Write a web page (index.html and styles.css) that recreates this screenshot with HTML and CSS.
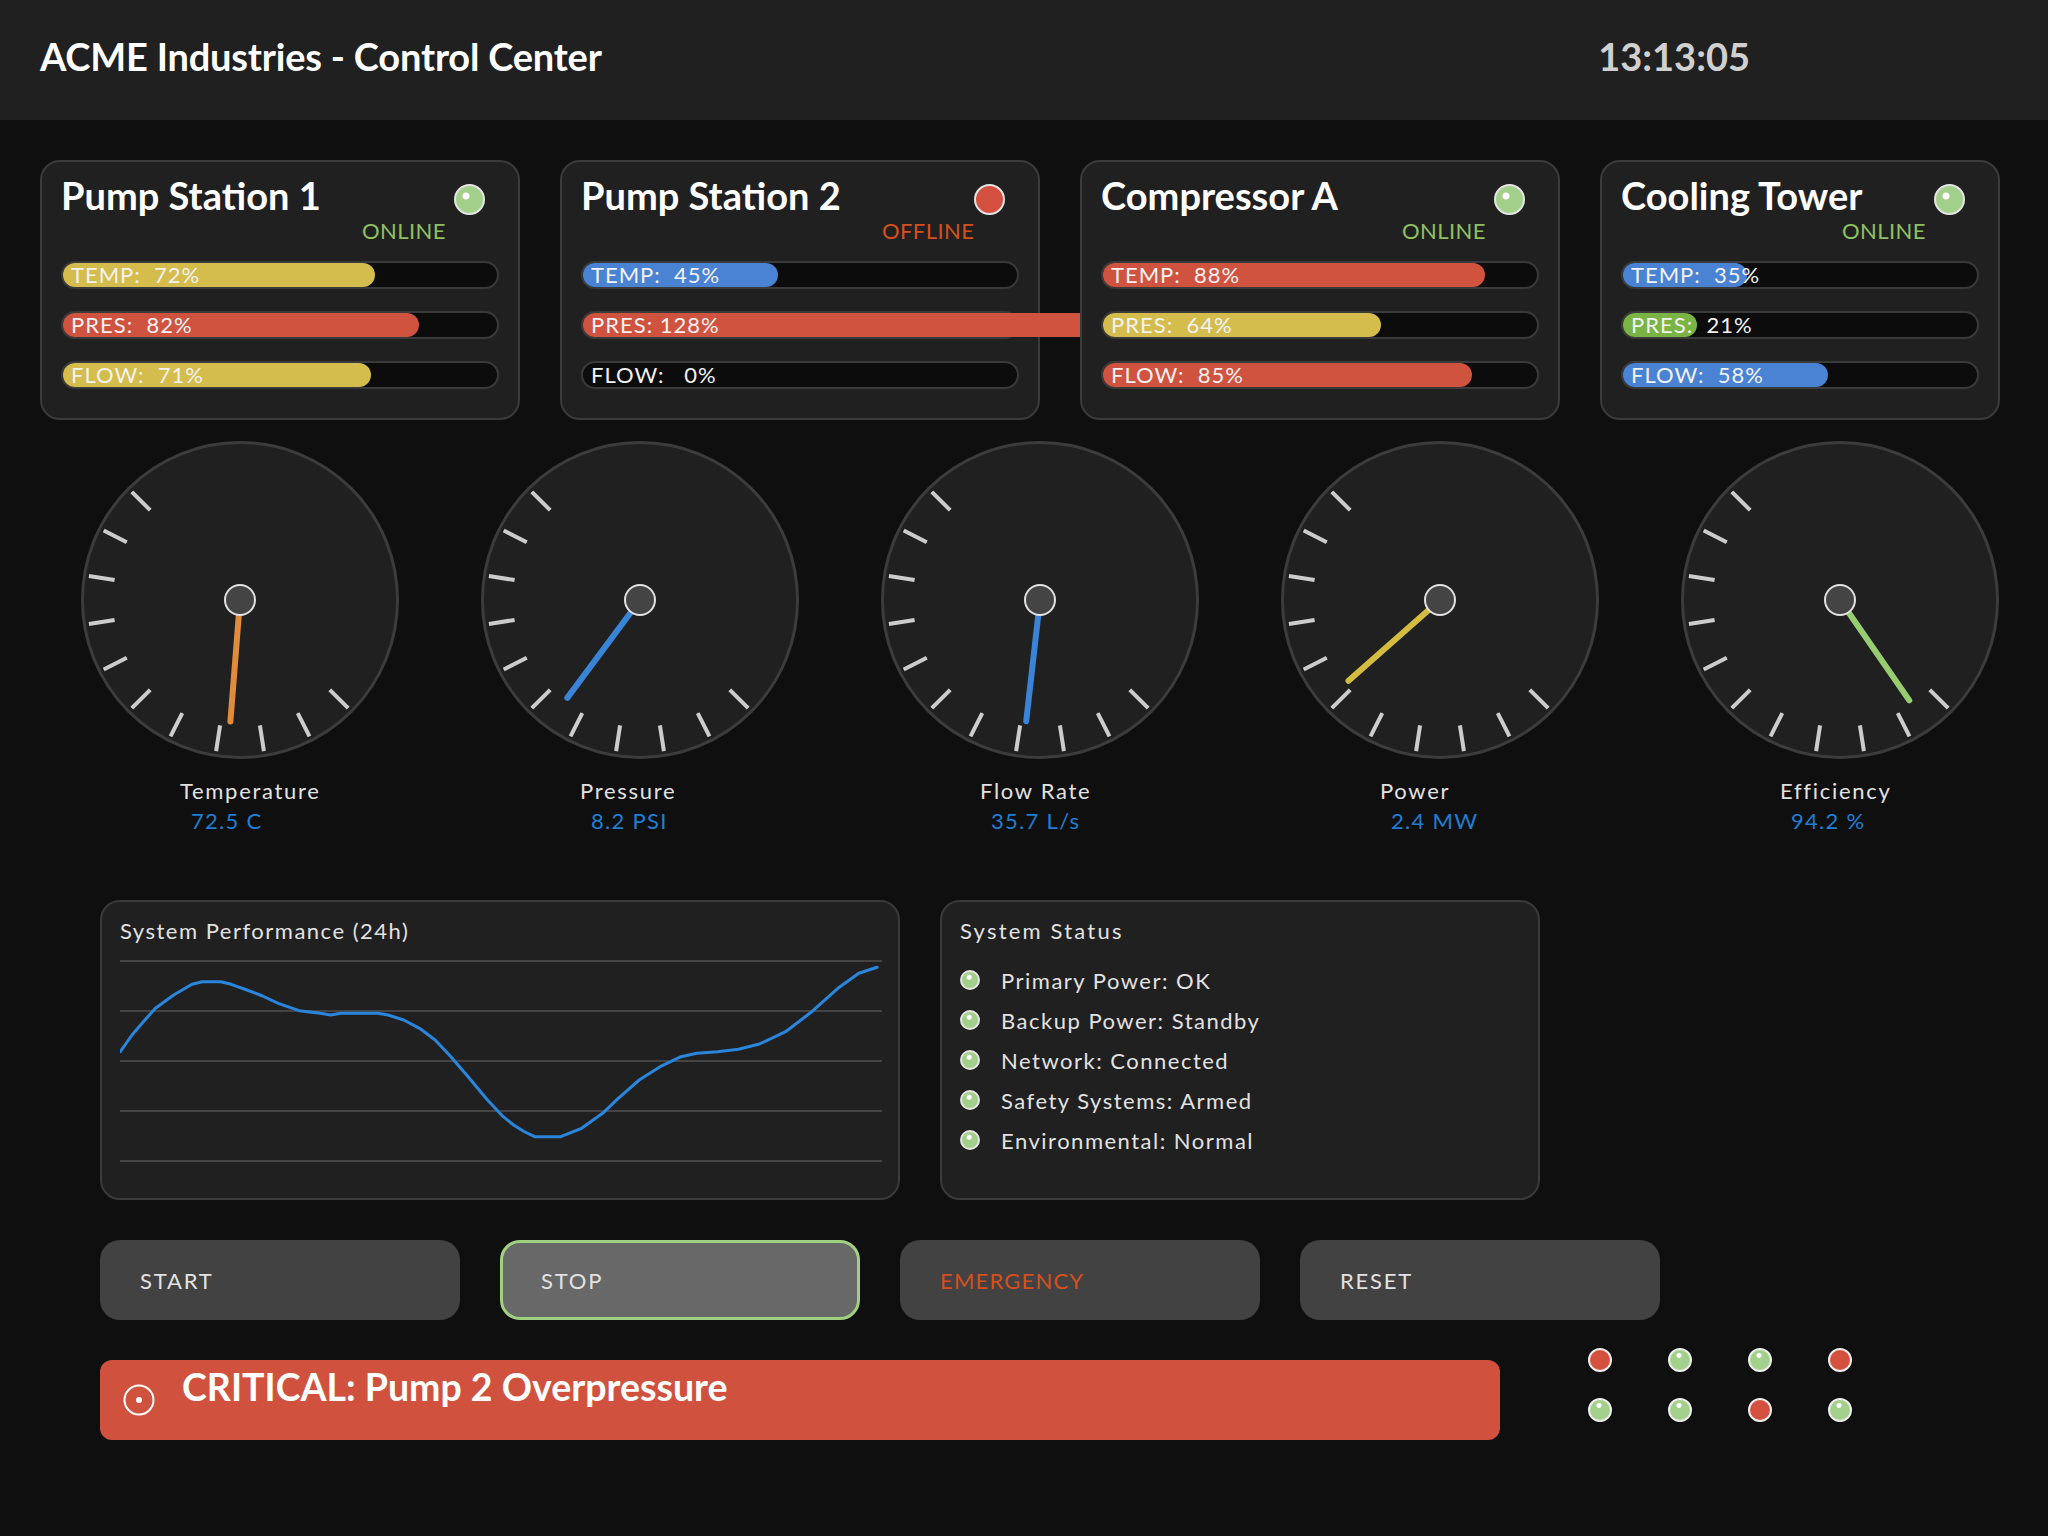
FILE: index.html
```html
<!DOCTYPE html>
<html lang="en">
<head>
<meta charset="utf-8">
<title>ACME Industries - Control Center</title>
<link rel="stylesheet" href="styles.css">
</head>
<body>
<header class="header">
  <div class="title">ACME Industries - Control Center</div>
  <div class="clock">13:13:05</div>
</header>
<main class="main">
  <section class="cards">
    <div class="card">
      <div class="card-head"><div class="card-title">Pump Station 1</div><div class="led led-green"></div></div>
      <div class="card-status"><span class="st st-online">ONLINE</span></div>
      <div class="bars">
        <div class="track"><div class="fill yellow" style="width:72%"></div><div class="bar-label">TEMP:  72%</div></div>
        <div class="track"><div class="fill red" style="width:82%"></div><div class="bar-label">PRES:  82%</div></div>
        <div class="track"><div class="fill yellow" style="width:71%"></div><div class="bar-label">FLOW:  71%</div></div>
      </div>
    </div>
    <div class="card">
      <div class="card-head"><div class="card-title">Pump Station 2</div><div class="led led-red"></div></div>
      <div class="card-status"><span class="st st-offline">OFFLINE</span></div>
      <div class="bars">
        <div class="track"><div class="fill blue" style="width:45%"></div><div class="bar-label">TEMP:  45%</div></div>
        <div class="track"><div class="fill red" style="width:128%"></div><div class="bar-label">PRES: 128%</div></div>
        <div class="track"><div class="fill" style="width:0%"></div><div class="bar-label">FLOW:   0%</div></div>
      </div>
    </div>
    <div class="card">
      <div class="card-head"><div class="card-title">Compressor A</div><div class="led led-green"></div></div>
      <div class="card-status"><span class="st st-online">ONLINE</span></div>
      <div class="bars">
        <div class="track"><div class="fill red" style="width:88%"></div><div class="bar-label">TEMP:  88%</div></div>
        <div class="track"><div class="fill yellow" style="width:64%"></div><div class="bar-label">PRES:  64%</div></div>
        <div class="track"><div class="fill red" style="width:85%"></div><div class="bar-label">FLOW:  85%</div></div>
      </div>
    </div>
    <div class="card">
      <div class="card-head"><div class="card-title">Cooling Tower</div><div class="led led-green"></div></div>
      <div class="card-status"><span class="st st-online">ONLINE</span></div>
      <div class="bars">
        <div class="track"><div class="fill blue" style="width:35%"></div><div class="bar-label">TEMP:  35%</div></div>
        <div class="track"><div class="fill green" style="width:21%"></div><div class="bar-label">PRES:  21%</div></div>
        <div class="track"><div class="fill blue" style="width:58%"></div><div class="bar-label">FLOW:  58%</div></div>
      </div>
    </div>
  </section>

  <section class="gauges">
    <div class="gauge">
      <svg viewBox="0 0 320 320" class="dial">
        <circle cx="160" cy="160" r="157.5" class="face"/>
        <g class="ticks">
          <line x1="70.2" y1="70.2" x2="51.8" y2="51.8"/><line x1="46.8" y1="102.3" x2="23.7" y2="90.5"/><line x1="34.6" y1="140.1" x2="8.9" y2="136.1"/><line x1="34.6" y1="179.9" x2="8.9" y2="183.9"/><line x1="46.8" y1="217.7" x2="23.7" y2="229.5"/><line x1="70.2" y1="249.8" x2="51.8" y2="268.2"/><line x1="102.3" y1="273.2" x2="90.5" y2="296.3"/><line x1="140.1" y1="285.4" x2="136.1" y2="311.1"/><line x1="179.9" y1="285.4" x2="183.9" y2="311.1"/><line x1="217.7" y1="273.2" x2="229.5" y2="296.3"/><line x1="249.8" y1="249.8" x2="268.2" y2="268.2"/>
        </g>
        <line x1="160" y1="160" x2="150.4" y2="281.6" class="needle" stroke="#e08c3c"/>
        <circle cx="160" cy="160" r="15" class="hub"/>
      </svg>
      <div class="gauge-label">Temperature</div>
      <div class="gauge-value">72.5 C</div>
    </div>
    <div class="gauge">
      <svg viewBox="0 0 320 320" class="dial">
        <circle cx="160" cy="160" r="157.5" class="face"/>
        <g class="ticks">
          <line x1="70.2" y1="70.2" x2="51.8" y2="51.8"/><line x1="46.8" y1="102.3" x2="23.7" y2="90.5"/><line x1="34.6" y1="140.1" x2="8.9" y2="136.1"/><line x1="34.6" y1="179.9" x2="8.9" y2="183.9"/><line x1="46.8" y1="217.7" x2="23.7" y2="229.5"/><line x1="70.2" y1="249.8" x2="51.8" y2="268.2"/><line x1="102.3" y1="273.2" x2="90.5" y2="296.3"/><line x1="140.1" y1="285.4" x2="136.1" y2="311.1"/><line x1="179.9" y1="285.4" x2="183.9" y2="311.1"/><line x1="217.7" y1="273.2" x2="229.5" y2="296.3"/><line x1="249.8" y1="249.8" x2="268.2" y2="268.2"/>
        </g>
        <line x1="160" y1="160" x2="87.3" y2="257.9" class="needle" stroke="#3a84d8"/>
        <circle cx="160" cy="160" r="15" class="hub"/>
      </svg>
      <div class="gauge-label">Pressure</div>
      <div class="gauge-value">8.2 PSI</div>
    </div>
    <div class="gauge">
      <svg viewBox="0 0 320 320" class="dial">
        <circle cx="160" cy="160" r="157.5" class="face"/>
        <g class="ticks">
          <line x1="70.2" y1="70.2" x2="51.8" y2="51.8"/><line x1="46.8" y1="102.3" x2="23.7" y2="90.5"/><line x1="34.6" y1="140.1" x2="8.9" y2="136.1"/><line x1="34.6" y1="179.9" x2="8.9" y2="183.9"/><line x1="46.8" y1="217.7" x2="23.7" y2="229.5"/><line x1="70.2" y1="249.8" x2="51.8" y2="268.2"/><line x1="102.3" y1="273.2" x2="90.5" y2="296.3"/><line x1="140.1" y1="285.4" x2="136.1" y2="311.1"/><line x1="179.9" y1="285.4" x2="183.9" y2="311.1"/><line x1="217.7" y1="273.2" x2="229.5" y2="296.3"/><line x1="249.8" y1="249.8" x2="268.2" y2="268.2"/>
        </g>
        <line x1="160" y1="160" x2="146.2" y2="281.2" class="needle" stroke="#3a84d8"/>
        <circle cx="160" cy="160" r="15" class="hub"/>
      </svg>
      <div class="gauge-label">Flow Rate</div>
      <div class="gauge-value">35.7 L/s</div>
    </div>
    <div class="gauge">
      <svg viewBox="0 0 320 320" class="dial">
        <circle cx="160" cy="160" r="157.5" class="face"/>
        <g class="ticks">
          <line x1="70.2" y1="70.2" x2="51.8" y2="51.8"/><line x1="46.8" y1="102.3" x2="23.7" y2="90.5"/><line x1="34.6" y1="140.1" x2="8.9" y2="136.1"/><line x1="34.6" y1="179.9" x2="8.9" y2="183.9"/><line x1="46.8" y1="217.7" x2="23.7" y2="229.5"/><line x1="70.2" y1="249.8" x2="51.8" y2="268.2"/><line x1="102.3" y1="273.2" x2="90.5" y2="296.3"/><line x1="140.1" y1="285.4" x2="136.1" y2="311.1"/><line x1="179.9" y1="285.4" x2="183.9" y2="311.1"/><line x1="217.7" y1="273.2" x2="229.5" y2="296.3"/><line x1="249.8" y1="249.8" x2="268.2" y2="268.2"/>
        </g>
        <line x1="160" y1="160" x2="68.5" y2="240.7" class="needle" stroke="#d4bc40"/>
        <circle cx="160" cy="160" r="15" class="hub"/>
      </svg>
      <div class="gauge-label">Power</div>
      <div class="gauge-value">2.4 MW</div>
    </div>
    <div class="gauge">
      <svg viewBox="0 0 320 320" class="dial">
        <circle cx="160" cy="160" r="157.5" class="face"/>
        <g class="ticks">
          <line x1="70.2" y1="70.2" x2="51.8" y2="51.8"/><line x1="46.8" y1="102.3" x2="23.7" y2="90.5"/><line x1="34.6" y1="140.1" x2="8.9" y2="136.1"/><line x1="34.6" y1="179.9" x2="8.9" y2="183.9"/><line x1="46.8" y1="217.7" x2="23.7" y2="229.5"/><line x1="70.2" y1="249.8" x2="51.8" y2="268.2"/><line x1="102.3" y1="273.2" x2="90.5" y2="296.3"/><line x1="140.1" y1="285.4" x2="136.1" y2="311.1"/><line x1="179.9" y1="285.4" x2="183.9" y2="311.1"/><line x1="217.7" y1="273.2" x2="229.5" y2="296.3"/><line x1="249.8" y1="249.8" x2="268.2" y2="268.2"/>
        </g>
        <line x1="160" y1="160" x2="229.3" y2="260.4" class="needle" stroke="#98cc70"/>
        <circle cx="160" cy="160" r="15" class="hub"/>
      </svg>
      <div class="gauge-label">Efficiency</div>
      <div class="gauge-value">94.2 %</div>
    </div>
  </section>

  <section class="panels">
    <div class="panel chart">
      <div class="panel-title chart-title">System Performance (24h)</div>
      <svg class="chart-svg" viewBox="0 0 762 212">
        <g class="grid">
          <line x1="0" y1="6" x2="762" y2="6"/><line x1="0" y1="56" x2="762" y2="56"/><line x1="0" y1="106" x2="762" y2="106"/><line x1="0" y1="156" x2="762" y2="156"/><line x1="0" y1="206" x2="762" y2="206"/>
        </g>
        <polyline class="series" points="0.3,96.7 12,80 24,66 35.4,53.3 53.7,40 72,29.3 82.4,26.7 100.8,26.7 111.2,29.3 126.9,35 142.6,41 158.3,48.3 179.2,55.7 200.1,58.3 210.6,60 221,58.3 257.7,58.3 268.1,60 283.8,65 299.5,73.3 315.2,85 330.9,101.7 346.6,120 367.5,145 383.2,161.7 393.6,170 404,176.5 414.6,181.7 440.7,181.7 461.6,173.3 482.6,158.3 498.2,143.3 519.2,125 540.1,111.7 561,101.7 576.7,98.3 597.6,96.7 618.5,94.3 639.5,89 665.6,76.7 691.8,56.7 717.9,33.3 738.8,18.3 757.1,12.3"/>
      </svg>
    </div>
    <div class="panel status">
      <div class="panel-title status-title">System Status</div>
      <div class="status-list">
        <div class="status-row"><span class="sdot"></span><span>Primary Power: OK</span></div>
        <div class="status-row"><span class="sdot"></span><span>Backup Power: Standby</span></div>
        <div class="status-row"><span class="sdot"></span><span>Network: Connected</span></div>
        <div class="status-row"><span class="sdot"></span><span>Safety Systems: Armed</span></div>
        <div class="status-row"><span class="sdot"></span><span>Environmental: Normal</span></div>
      </div>
    </div>
  </section>

  <section class="buttons">
    <div class="btn">START</div>
    <div class="btn btn-active">STOP</div>
    <div class="btn btn-emergency">EMERGENCY</div>
    <div class="btn">RESET</div>
  </section>

  <section class="bottom">
    <div class="alert">
      <svg class="alert-icon" viewBox="0 0 32 32"><circle cx="16" cy="16" r="14.5" fill="none" stroke="#fff" stroke-width="2"/><circle cx="16" cy="16" r="3" fill="#fff"/></svg>
      <div class="alert-text">CRITICAL: Pump 2 Overpressure</div>
    </div>
    <div class="dot-grid">
      <span class="dot dot-red"></span><span class="dot dot-green"></span><span class="dot dot-green"></span><span class="dot dot-red"></span>
      <span class="dot dot-green"></span><span class="dot dot-green"></span><span class="dot dot-red"></span><span class="dot dot-green"></span>
    </div>
  </section>
</main>
</body>
</html>
```

FILE: styles.css
```css
html, body {
  margin: 0;
  padding: 0;
}
body {
  width: 2048px;
  height: 1536px;
  overflow: hidden;
  background: #0f0f0f;
  color: #dddddd;
  font-family: Lato, "Open Sans", "Liberation Sans", sans-serif;
}

/* header */
.header {
  height: 120px;
  box-sizing: border-box;
  background: #202020;
  display: flex;
  align-items: flex-start;
  padding: 33px 40px 0 40px;
}
.title {
  flex: 1;
  font-size: 38px;
  font-weight: 700;
  color: #ffffff;
  line-height: normal;
  letter-spacing: -0.2px;
}
.clock {
  font-size: 38px;
  font-weight: 700;
  color: #d0d0d0;
  margin-right: 258px;
  line-height: normal;
}

.main {
  padding: 0 40px;
}

/* station cards */
.cards {
  display: grid;
  grid-template-columns: 480px 480px 480px 400px;
  gap: 40px;
  margin-top: 40px;
}
.card {
  height: 260px;
  box-sizing: border-box;
  border: 2px solid #3a3a3a;
  border-radius: 20px;
  background: #202020;
  padding: 10px 19px 0 19px;
}
.card-head {
  display: flex;
  justify-content: space-between;
  align-items: flex-start;
}
.card-title {
  font-size: 38px;
  font-weight: 700;
  color: #ffffff;
  line-height: 46px;
}
.led {
  width: 31px;
  height: 31px;
  box-sizing: border-box;
  border-radius: 50%;
  border: 2px solid #e4e4e4;
  margin-top: 12px;
  margin-right: 14px;
}
.led-green {
  background: radial-gradient(circle at 37% 37%, #ffffff 0 3px, #a2d08a 4px);
}
.led-red {
  background: #d4503f;
}
.card-status {
  display: flex;
  justify-content: flex-end;
}
.st {
  width: 124px;
  margin-right: 13px;
  font-size: 22px;
  line-height: 26px;
  letter-spacing: 0.4px;
}
.st-online { color: #8fc062; }
.st-offline { color: #d6501e; }

.bars {
  margin-top: 17px;
}
.track {
  display: grid;
  grid-template-columns: 100%;
  height: 28px;
  box-sizing: border-box;
  border: 2px solid #3a3a3a;
  border-radius: 14px;
  background: #0c0c0c;
  margin-bottom: 22px;
}
.fill, .bar-label {
  grid-area: 1 / 1;
}
.fill {
  height: 24px;
  border-radius: 12px;
}
.yellow { background: #d4bd4c; }
.red { background: #d05340; }
.blue { background: #4a82d4; }
.green { background: #7ab444; }
.bar-label {
  font-size: 22px;
  line-height: 24px;
  padding-left: 8px;
  white-space: pre;
  color: #f2f2f2;
  letter-spacing: 1px;
}

/* gauges */
.gauges {
  display: flex;
  gap: 80px;
  margin: 20px 0 0 40px;
}
.gauge {
  width: 320px;
}
.dial {
  display: block;
  width: 320px;
  height: 320px;
}
.face {
  fill: #202020;
  stroke: #3c3c3c;
  stroke-width: 3;
}
.ticks line {
  stroke: #cccccc;
  stroke-width: 4;
}
.needle {
  stroke-width: 6;
  stroke-linecap: round;
}
.hub {
  fill: #444444;
  stroke: #e2e2e2;
  stroke-width: 2;
}
.gauge-label {
  margin-top: 16px;
  padding-left: 100px;
  font-size: 22px;
  line-height: 30px;
  color: #e2e2e2;
  letter-spacing: 1.7px;
}
.gauge-value {
  padding-left: 111px;
  font-size: 22px;
  line-height: 30px;
  color: #1f7fd4;
  letter-spacing: 1.3px;
}

/* panels */
.panels {
  display: flex;
  gap: 40px;
  margin: 64px 0 0 60px;
}
.panel {
  height: 300px;
  box-sizing: border-box;
  border: 2px solid #3a3a3a;
  border-radius: 20px;
  background: #202020;
  padding: 14px 18px 0 18px;
}
.chart { width: 800px; }
.status { width: 600px; }
.panel-title {
  font-size: 22px;
  line-height: 30px;
  color: #e2e2e2;
}
.chart-title { letter-spacing: 1.5px; }
.status-title { letter-spacing: 2.2px; }
.chart-svg {
  display: block;
  width: 762px;
  height: 212px;
  margin-top: 9px;
}
.grid line {
  stroke: #444444;
  stroke-width: 2;
}
.series {
  fill: none;
  stroke: #2a86dc;
  stroke-width: 3;
  stroke-linejoin: round;
  stroke-linecap: round;
}
.status-list {
  margin-top: 14px;
}
.status-row {
  display: flex;
  align-items: center;
  gap: 21px;
  height: 40px;
  font-size: 22px;
  color: #e2e2e2;
  letter-spacing: 1.5px;
}
.sdot {
  width: 20px;
  height: 20px;
  box-sizing: border-box;
  border-radius: 50%;
  border: 2px solid #e4e4e4;
  background: radial-gradient(circle at 45% 33%, #ffffff 0 2px, #a2d08a 3px);
  flex: none;
}

/* buttons */
.buttons {
  display: flex;
  gap: 40px;
  margin: 40px 0 0 60px;
}
.btn {
  width: 360px;
  height: 80px;
  box-sizing: border-box;
  border-radius: 20px;
  background: #424242;
  color: #e2e2e2;
  font-size: 22px;
  letter-spacing: 1.8px;
  display: flex;
  align-items: center;
  padding-left: 40px;
}
.btn-active {
  background: #686868;
  border: 3px solid #a0d080;
  padding-left: 38px;
}
.btn-emergency {
  color: #d6501e;
  letter-spacing: 1.2px;
}

/* bottom row */
.bottom {
  display: flex;
  align-items: flex-start;
  margin: 20px 0 0 60px;
}
.alert {
  width: 1400px;
  height: 80px;
  box-sizing: border-box;
  margin-top: 20px;
  background: #d0523e;
  border-radius: 12px;
  display: flex;
  align-items: center;
  padding-left: 23px;
}
.alert-icon {
  width: 32px;
  height: 32px;
  flex: none;
}
.alert-text {
  align-self: flex-start;
  margin-top: 7px;
  margin-left: 27px;
  font-size: 37.5px;
  line-height: 40px;
  font-weight: 700;
  color: #ffffff;
}
.dot-grid {
  display: grid;
  grid-template-columns: repeat(4, 24px);
  column-gap: 56px;
  row-gap: 26px;
  margin-left: 88px;
  margin-top: 8px;
}
.dot {
  width: 24px;
  height: 24px;
  box-sizing: border-box;
  border-radius: 50%;
  border: 2px solid #eeeeee;
}
.dot-green {
  background: radial-gradient(circle at 45% 27%, #ffffff 0 2px, #a2d08a 3px);
}
.dot-red {
  background: #d4503f;
}
```
